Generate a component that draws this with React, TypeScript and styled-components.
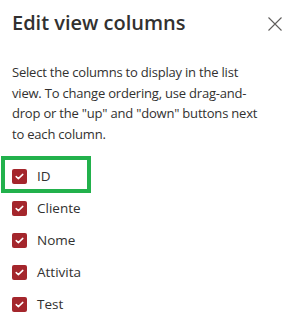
import React from 'react';
import styled, { createGlobalStyle } from 'styled-components';

const GlobalStyle = createGlobalStyle`
	html, body {
		margin: 0;
		padding: 0;
		background: #ffffff;
	}
	body {
		font-family: 'Open Sans', 'Noto Sans', sans-serif;
		color: #323130;
	}
`;

const Panel = styled.div`
	width: 288px;
	height: 320px;
	box-sizing: border-box;
	padding: 9px 12px 0 12px;
	overflow: hidden;
`;

const Header = styled.div`
	display: flex;
	justify-content: space-between;
	align-items: center;
	height: 28px;
`;

const Title = styled.h1`
	margin: 0;
	font-size: 20px;
	line-height: 28px;
	font-weight: 600;
	color: #323130;
`;

const CloseButton = styled.button`
	border: none;
	background: none;
	padding: 0;
	width: 16px;
	height: 16px;
	margin-right: -7px;
	margin-top: 1px;
	display: flex;
	align-items: center;
	justify-content: center;
	cursor: pointer;
`;

const Description = styled.p`
	margin: 25px 0 0 0;
	width: 251px;
	font-size: 13px;
	letter-spacing: -0.2px;
	line-height: 20.5px;
	color: #323130;
`;

const ColumnList = styled.ul`
	list-style: none;
	margin: 16px 0 0 0;
	padding: 0;
`;

const ColumnRow = styled.li<{ $highlighted?: boolean }>`
	position: relative;
	display: flex;
	align-items: center;
	gap: 10px;
	height: 32px;
	font-size: 13.5px;
	color: #323130;

	&::after {
		content: '';
		display: ${(p) => (p.$highlighted ? 'block' : 'none')};
		position: absolute;
		left: -11px;
		top: -4px;
		width: 90px;
		height: 37px;
		box-sizing: border-box;
		border: 4px solid #22b14c;
		pointer-events: none;
	}
`;

const Box = styled.span`
	width: 15px;
	height: 15px;
	border-radius: 2px;
	background: #a4262c;
	display: flex;
	align-items: center;
	justify-content: center;
	flex-shrink: 0;
`;

const columns = ['ID', 'Cliente', 'Nome', 'Attivita', 'Test'];

const CheckIcon = (): JSX.Element => (
	<svg width="15" height="15" viewBox="0 0 15 15">
		<path d="M4.2 7.6 L6.4 9.6 L10.8 5.4" fill="none" stroke="#ffffff" strokeWidth="1.5" strokeLinecap="round" strokeLinejoin="round" />
	</svg>
);

const CloseIcon = (): JSX.Element => (
	<svg width="14" height="14" viewBox="0 0 14 14">
		<path d="M0.5 0.5 L13.5 13.5 M13.5 0.5 L0.5 13.5" stroke="#605e5c" strokeWidth="1.1" fill="none" />
	</svg>
);

export default function App(): JSX.Element {
	return (
		<>
			<GlobalStyle />
			<Panel>
				<Header>
					<Title>Edit view columns</Title>
					<CloseButton aria-label="Close">
						<CloseIcon />
					</CloseButton>
				</Header>
				<Description>
					Select the columns to display in the list view. To change ordering, use drag-and-drop or the "up" and
					"down" buttons next to each column.
				</Description>
				<ColumnList>
					{columns.map((name, i) => (
						<ColumnRow key={name} $highlighted={i === 0}>
							<Box>
								<CheckIcon />
							</Box>
							{name}
						</ColumnRow>
					))}
				</ColumnList>
			</Panel>
		</>
	);
}
